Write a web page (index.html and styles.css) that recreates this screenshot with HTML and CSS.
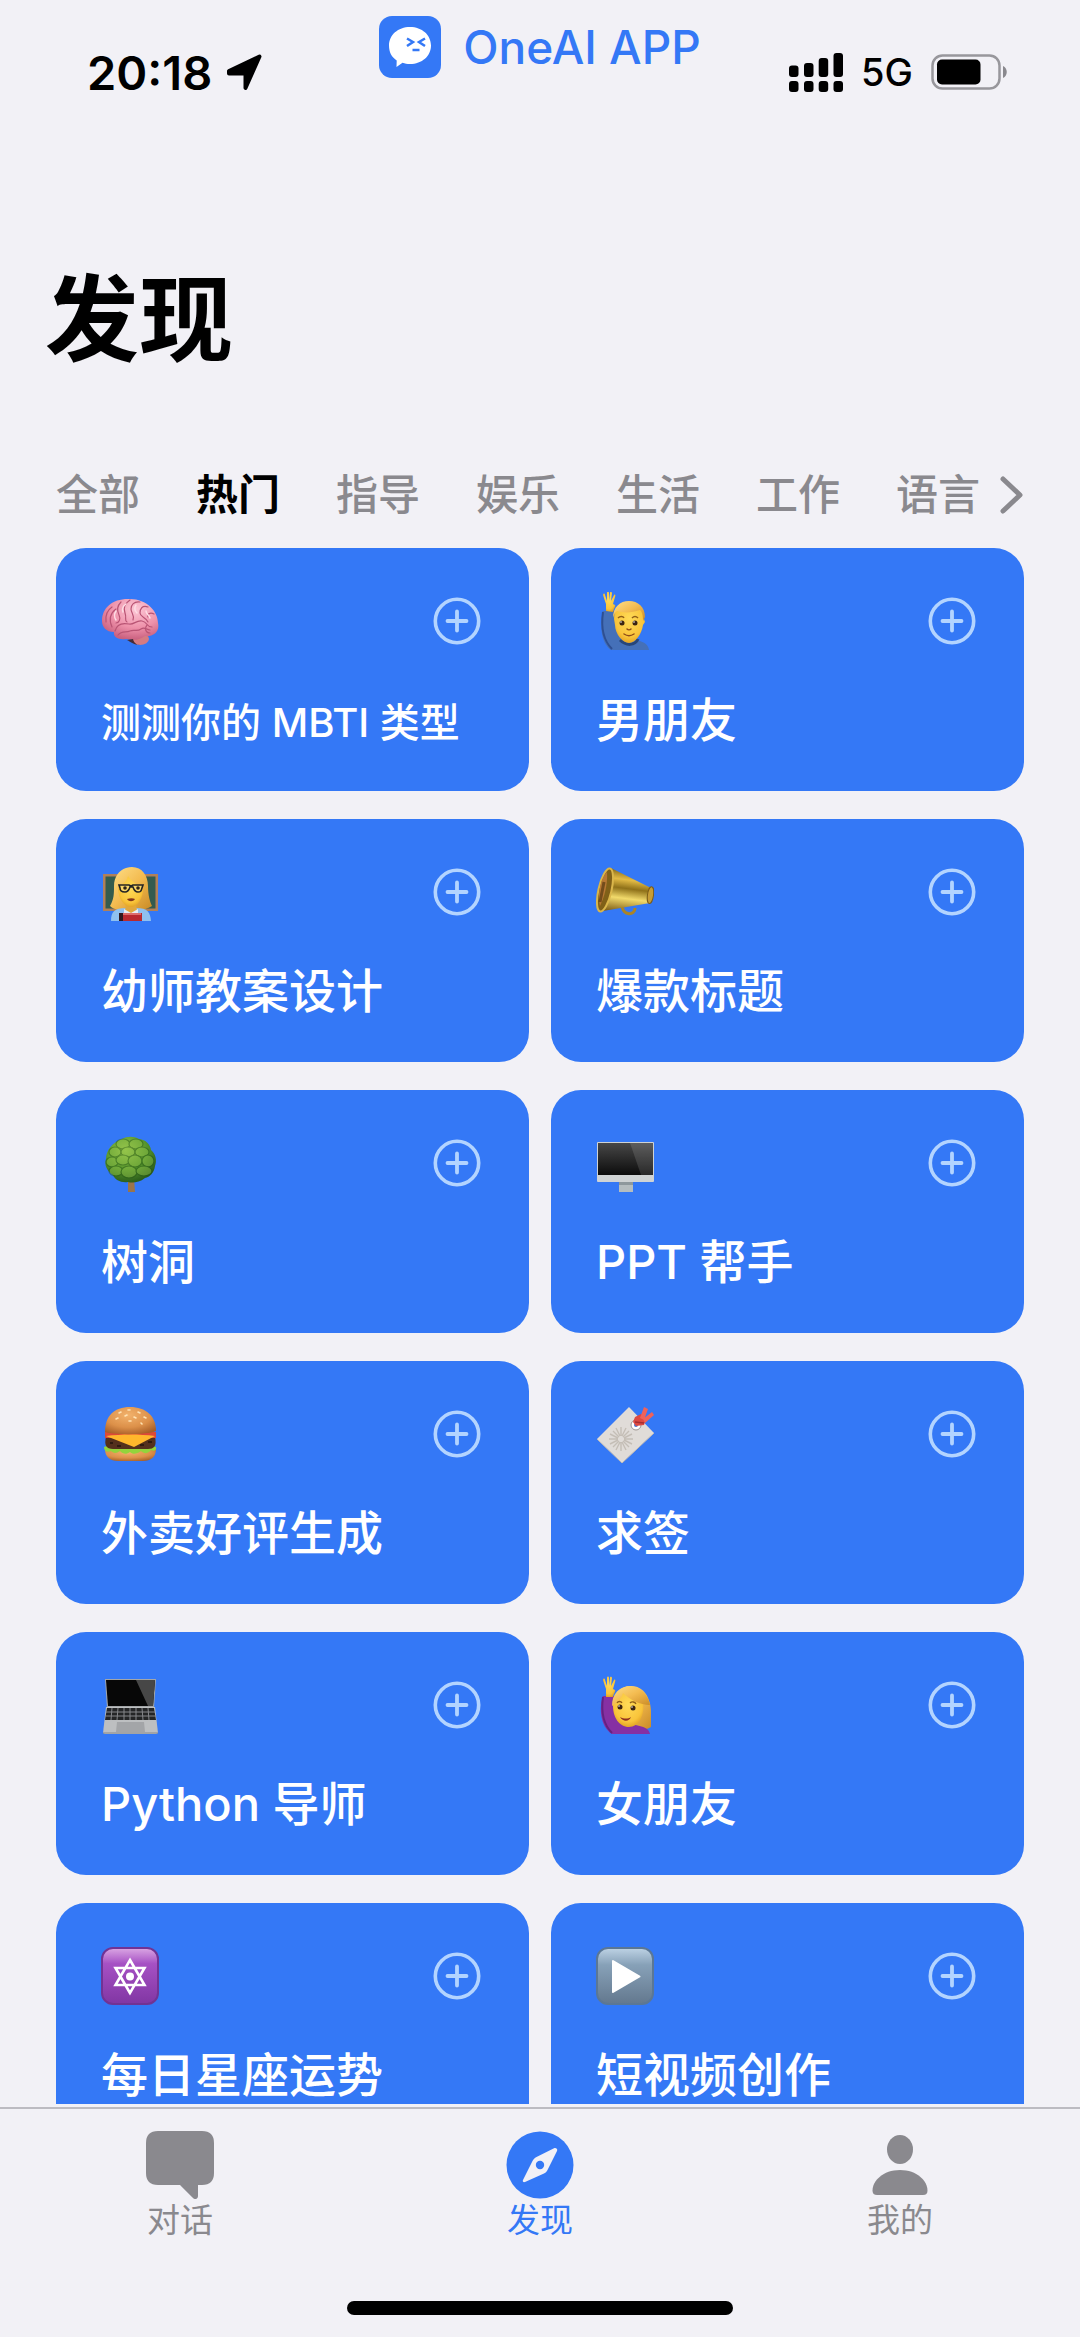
FILE: index.html
```html
<!DOCTYPE html>
<html lang="zh-CN">
<head>
    <meta charset="UTF-8">
    <meta name="viewport" content="width=device-width, initial-scale=1.0">
    <title>发现 - OneAI APP</title>
    <link rel="stylesheet" href="styles.css">
</head>
<body>
    <header class="status-bar">
        <div class="status-left">
            <span class="time">20:18</span>
            <svg class="location-icon" viewBox="0 0 37 37">
                <path d="M3 17L33.500 2.500 19.500 34V19.500H3z" stroke="#000" stroke-width="4" stroke-linejoin="round"/>
            </svg>
        </div>
        <div class="brand">
            <svg class="brand-logo" viewBox="0 0 62 62">
                <rect width="62" height="62" rx="13" fill="#3478f6"/>
                <path d="M31 11c12 0 21 8 21 18.500S43 48 31 48c-3 0-5-.4-7.500-1.200L17.500 51l.2-6.500C12.500 41 10 36 10 29.500 10 19 19 11 31 11z" fill="#fff"/>
                <path d="M28 22.500l6 3.500-6 4M46 22.500L40 26l6 4M33.500 34h7" fill="none" stroke="#3478f6" stroke-width="2.500"/>
            </svg>
            <span class="brand-name">OneAI APP</span>
        </div>
        <div class="status-right">
            <svg class="signal-icon" viewBox="0 0 54 39">
                <rect x="0" y="12.500" width="9.500" height="11.500" rx="3"/>
                <rect x="15" y="10" width="9.500" height="14" rx="3"/>
                <rect x="29.700" y="5" width="9.500" height="19" rx="3"/>
                <rect x="44.500" y="0" width="9.500" height="24" rx="3"/>
                <rect x="0" y="28" width="9.500" height="11" rx="3"/>
                <rect x="15" y="28" width="9.500" height="11" rx="3"/>
                <rect x="29.700" y="28" width="9.500" height="11" rx="3"/>
                <rect x="44.500" y="28" width="9.500" height="11" rx="3"/>
            </svg>
            <span class="network">5G</span>
            <svg class="battery-icon" viewBox="0 0 76 36">
                <rect x="1.500" y="1.500" width="67" height="33" rx="10" fill="none" stroke="#98979c" stroke-width="2.500"/>
                <rect x="6" y="5.500" width="43.500" height="25" rx="5"/>
                <path d="M72 12c5 2 5 10 0 12z" fill="#8a898e"/>
            </svg>
        </div>
    </header>

    <h1 class="page-title">发现</h1>

    <nav class="category-tabs">
        <button class="tab">全部</button>
        <button class="tab active">热门</button>
        <button class="tab">指导</button>
        <button class="tab">娱乐</button>
        <button class="tab">生活</button>
        <button class="tab">工作</button>
        <button class="tab">语言</button>
        <button class="more-button" aria-label="更多">
            <svg viewBox="0 0 24 38">
                <path d="M3 3l17 16L3 35" fill="none" stroke="#8a898e" stroke-width="5" stroke-linecap="round" stroke-linejoin="round"/>
            </svg>
        </button>
    </nav>

    <svg class="defs" aria-hidden="true">
        <defs>
            <symbol id="plus" viewBox="0 0 48 48">
                <circle cx="24" cy="24" r="21.700" fill="none" stroke="#b3d4ff" stroke-width="3.600"/>
                <path d="M24 14.500v19M14.500 24h19" fill="none" stroke="#b3d4ff" stroke-width="3.800" stroke-linecap="round"/>
            </symbol>
            <radialGradient id="brainFill" cx=".6" cy=".25" r=".75">
                <stop offset="0" stop-color="#fcc8d6"/>
                <stop offset=".6" stop-color="#ee91aa"/>
                <stop offset="1" stop-color="#c9607f"/>
            </radialGradient>
            <radialGradient id="skin" cx=".5" cy=".4" r=".65">
                <stop offset="0" stop-color="#ffda57"/>
                <stop offset=".7" stop-color="#f9c43a"/>
                <stop offset="1" stop-color="#dc9a1e"/>
            </radialGradient>
            <linearGradient id="hair" x2="1" y2="1">
                <stop offset="0" stop-color="#ffe08a"/>
                <stop offset=".5" stop-color="#f3bb50"/>
                <stop offset="1" stop-color="#c98a25"/>
            </linearGradient>
            <linearGradient id="gold" x1=".35" y1="0" x2=".2" y2="1">
                <stop offset="0" stop-color="#7d5f14"/>
                <stop offset=".25" stop-color="#e3bb45"/>
                <stop offset=".45" stop-color="#8f7119"/>
                <stop offset=".68" stop-color="#f2da6b"/>
                <stop offset="1" stop-color="#80601a"/>
            </linearGradient>
            <radialGradient id="leaf" cx=".4" cy=".3" r=".7">
                <stop offset="0" stop-color="#9ac94c"/>
                <stop offset=".6" stop-color="#56952c"/>
                <stop offset="1" stop-color="#2c5e1b"/>
            </radialGradient>
            <linearGradient id="screen" x2="0" y2="1">
                <stop offset="0" stop-color="#474747"/>
                <stop offset="1" stop-color="#0c0c0c"/>
            </linearGradient>
            <radialGradient id="bun" cx=".45" cy=".3" r=".75">
                <stop offset="0" stop-color="#f2b26c"/>
                <stop offset=".6" stop-color="#dc9049"/>
                <stop offset="1" stop-color="#a85f28"/>
            </radialGradient>
            <linearGradient id="purple" x2="0" y2="1">
                <stop offset="0" stop-color="#dba7e4"/>
                <stop offset=".28" stop-color="#a651c4"/>
                <stop offset="1" stop-color="#8136a3"/>
            </linearGradient>
            <linearGradient id="slate" x2="0" y2="1">
                <stop offset="0" stop-color="#bed3e5"/>
                <stop offset=".3" stop-color="#87a1b8"/>
                <stop offset="1" stop-color="#63788e"/>
            </linearGradient>
        </defs>
    </svg>

    <main class="card-list">
        <article class="card">
            <div class="card-top">
                <svg class="emoji" viewBox="0 0 58 58">
                    <ellipse cx="39" cy="47" rx="9" ry="6" fill="#d57b82"/>
                    <path d="M1 29C1 16 11 7 27 7c18-1 30 12 30 24 2 9-5 14-13 13-6 5-14 4-19 3-8 1-13-2-12-7C5 40 1 35 1 29z" fill="url(#brainFill)"/>
                    <path d="M5 30c-1-8 3-13 6-15M11 35c-4-9 0-15 4-18M20 10c-5 5-4 9-2 13s0 8-3 8M29 8c-6 4-7 8-5 13s-1 8 2 9M39 10c-6-1-9 3-9 7s4 6 2 11M47 15c-6-2-8 2-8 6s6 4 8 9M53 22c-4-2-7 0-6 3M14 39c2-8 9-8 14-7s7-4 13-3 4 6 10 6M17 43c4-5 8-2 12-4s7 1 11-2 5 1 9 1M46 33c-3 4-1 8 3 8" fill="none" stroke="#b95474" stroke-width="1.200" stroke-linecap="round"/>
                    <path d="M15 19c-2 3-2 6 0 9M25 12c-3 2-4 5-3 8M35 13c-2 3-1 6 1 8M45 19c0 3 3 4 4 7" fill="none" stroke="#fddce4" stroke-width="1.500" stroke-linecap="round"/>
                    <path d="M26 48l6-1c1 4 4 6 7 6-6 0-9-3-13-5z" fill="#472c35"/>
                </svg>
                <button class="add-button" aria-label="添加"><svg><use href="#plus"/></svg></button>
            </div>
            <h2 class="card-title small">测测你的 MBTI 类型</h2>
        </article>

        <article class="card">
            <div class="card-top">
                <svg class="emoji" viewBox="0 0 58 58">
                    <path d="M7 19h12c0 12 2 18 8 23 8 7 25 5 26 16H15C4 50 4 31 7 19z" fill="#4570b8"/>
                    <path d="M7 20c-2 14 0 28 9 37" fill="none" stroke="#2e4f92" stroke-width="2"/>
                    <path d="M24 48c6 6 15 6 18-1" fill="none" stroke="#284679" stroke-width="3"/>
                    <path d="M10 19V12L7 3c0-2 2-2 2 0l2 6V1c0-2 2-2 2 0v8l1-8c0-2 2-1 2 0l-1 8 3-6c1-1 2 0 1 2l-2 7 2 1c1 1-1 3-2 7z" fill="url(#skin)"/>
                    <path d="M18 27c0-11 6-17 15-17s16 7 15 17l1 3-2 3c-1 9-8 18-14 18S19 42 19 33z" fill="url(#skin)"/>
                    <path d="M17 26c0-11 7-17 16-17s16 6 16 16l-2 4c0-6-1-9-3-11-8 3-17 3-23 1-2 1-3 4-4 7z" fill="url(#hair)"/>
                    <path d="M22 26c2-2 5-2 6 0M36 26c2-2 4-2 6 0" fill="none" stroke="#905f18" stroke-width="1.500"/>
                    <circle cx="26" cy="31" r="2.500" fill="#3c2412"/><circle cx="39" cy="31" r="2.500" fill="#3c2412"/>
                    <circle cx="25" cy="30" r=".8" fill="#fff"/><circle cx="38" cy="30" r=".8" fill="#fff"/>
                    <path d="M31 37c1 1 3 1 4 0M28 42c3 2 7 2 10 0" fill="none" stroke="#8e4c18" stroke-width="1.500" stroke-linecap="round"/>
                </svg>
                <button class="add-button" aria-label="添加"><svg><use href="#plus"/></svg></button>
            </div>
            <h2 class="card-title">男朋友</h2>
        </article>

        <article class="card">
            <div class="card-top">
                <svg class="emoji" viewBox="0 0 58 58">
                    <rect x="2" y="11" width="55" height="37" fill="#b08059"/>
                    <rect x="4.500" y="13.500" width="50" height="32" fill="#345b4d"/>
                    <path d="M25 5c14-4 22 6 22 18 0 9 2 16 4 20-5 3-9 4-13 3H20c-4 1-8 0-11-3 4-7 4-12 4-20 0-9 5-16 12-18z" fill="url(#hair)"/>
                    <path d="M10 58c0-9 3-13 15-13h10c12 0 14 4 15 13z" fill="#8fc0ef"/>
                    <path d="M25 41h10l1 7-6 4-6-4z" fill="#e1a83c"/>
                    <path d="M23 46l7 4 7-4v12H23z" fill="#e7eef6"/>
                    <path d="M17 24c6-3 9-7 10-11 4 6 9 9 15 11 1 10-5 20-12 20s-13-9-13-20z" fill="url(#skin)"/>
                    <path d="M18 22h10l2 1 2-1h10l-1 3c-1 4-2 4-4 4-3 0-4-2-5-5h-3c-1 3-2 5-5 5s-5-1-5-4z" fill="#fbd668" stroke="#242324" stroke-width="1.600"/>
                    <circle cx="24" cy="25" r="1.800" fill="#2f2318"/><circle cx="37" cy="25" r="1.800" fill="#2f2318"/>
                    <path d="M26 36c3-1 6-1 8 0-2 3-6 3-8 0z" fill="#82361d"/>
                    <path d="M18 50h23v8H18z" fill="#b9292f"/>
                    <path d="M18 50h4v8h-4z" fill="#301a20"/>
                    <path d="M22 51h18" stroke="#ea8581" stroke-width="1.500"/>
                </svg>
                <button class="add-button" aria-label="添加"><svg><use href="#plus"/></svg></button>
            </div>
            <h2 class="card-title">幼师教案设计</h2>
        </article>

        <article class="card">
            <div class="card-top">
                <svg class="emoji" viewBox="0 0 58 58">
                    <path d="M26 43c1 10 13 10 13 2" fill="none" stroke="#aa8427" stroke-width="3"/>
                    <path d="M15 5l40 20c4 4 2 13-1 15L7 48z" fill="url(#gold)"/>
                    <ellipse cx="9" cy="27" rx="6.500" ry="22" transform="rotate(13 9 27)" fill="#806018" stroke="#dab64b" stroke-width="2"/>
                    <path d="M11 9c-6 5-10 22-7 34 4-8 8-22 7-34z" fill="#b67834"/>
                    <path d="M8 19l-4 20" stroke="#48300d" stroke-width="3" opacity=".6"/>
                    <ellipse cx="54.500" cy="32" rx="3" ry="8.500" transform="rotate(8 54 32)" fill="#c69d37" stroke="#7a5b18"/>
                </svg>
                <button class="add-button" aria-label="添加"><svg><use href="#plus"/></svg></button>
            </div>
            <h2 class="card-title">爆款标题</h2>
        </article>

        <article class="card">
            <div class="card-top">
                <svg class="emoji" viewBox="0 0 58 58">
                    <path d="M27 44h6l1 14h-7z" fill="#9a744a"/>
                    <path d="M21 5c5-3 12-3 17 0 7 1 11 5 12 11 5 4 6 11 4 16-1 7-5 11-10 12-6 5-13 5-17 4-7 1-13-2-15-7-6-4-9-10-7-16 0-9 7-17 16-20z" fill="url(#leaf)"/>
                    <g fill="#8fc04a" opacity=".45" stroke="#255416" stroke-width="1.200">
                        <ellipse cx="22" cy="10" rx="7" ry="5"/><ellipse cx="35" cy="10" rx="7" ry="5"/><ellipse cx="14" cy="18" rx="6" ry="5"/><ellipse cx="27" cy="18" rx="7" ry="5"/><ellipse cx="41" cy="18" rx="7" ry="5"/>
                        <ellipse cx="11" cy="28" rx="6" ry="5"/><ellipse cx="22" cy="26" rx="7" ry="5"/><ellipse cx="34" cy="27" rx="7" ry="6"/><ellipse cx="47" cy="27" rx="6" ry="6"/><ellipse cx="15" cy="37" rx="7" ry="5"/><ellipse cx="28" cy="38" rx="8" ry="6"/><ellipse cx="43" cy="37" rx="8" ry="5"/>
                    </g>
                </svg>
                <button class="add-button" aria-label="添加"><svg><use href="#plus"/></svg></button>
            </div>
            <h2 class="card-title">树洞</h2>
        </article>

        <article class="card">
            <div class="card-top">
                <svg class="emoji" viewBox="0 0 58 58">
                    <path d="M23 47h14v11H23z" fill="#b5bdbf"/>
                    <path d="M23 48h14v3H23z" fill="#8e989c"/>
                    <rect x="1" y="8" width="57" height="40" rx="1" fill="#cfd3d4"/>
                    <rect x="2" y="9" width="55" height="32" fill="url(#screen)"/>
                    <path d="M34 9h23v32H45z" fill="#fff" opacity=".12"/>
                </svg>
                <button class="add-button" aria-label="添加"><svg><use href="#plus"/></svg></button>
            </div>
            <h2 class="card-title">PPT 帮手</h2>
        </article>

        <article class="card">
            <div class="card-top">
                <svg class="emoji" viewBox="0 0 58 58">
                    <path d="M4 44h51c0 8-5 12-13 12H17C9 56 4 52 4 44z" fill="url(#bun)"/>
                    <path d="M3 42c4-3 48-3 52 0 1 3-2 5-5 3-3 4-7 4-10 1-4 3-8 4-11 1-4 3-7 2-10-1-4 3-7 2-9 0-4 2-7 0-7-4z" fill="#93d43c"/>
                    <path d="M5 32h49c2 9-1 12-7 12H12c-7 0-9-4-7-12z" fill="#54301d"/>
                    <path d="M9 38h3M16 41h4M39 40h4M47 37h4" stroke="#2f1a10" stroke-width="2"/>
                    <path d="M4 27h51v6H4z" fill="#dc4938"/>
                    <path d="M5 31c16-2 33-2 49 0L33 42z" fill="#ffb72c"/>
                    <path d="M4 27C4 11 13 2 29 2s26 9 26 24c-7 4-44 4-51 1z" fill="url(#bun)"/>
                    <path d="M18 8l2-1M27 5h2M37 7l2 1M24 11l2-1M33 12l2 1M43 12l2 1M15 14l2-1M28 16h2M40 18l1 1" stroke="#ffe3b4" stroke-width="1.600" stroke-linecap="round"/>
                </svg>
                <button class="add-button" aria-label="添加"><svg><use href="#plus"/></svg></button>
            </div>
            <h2 class="card-title">外卖好评生成</h2>
        </article>

        <article class="card">
            <div class="card-top">
                <svg class="emoji" viewBox="0 0 58 58">
                    <path d="M33 2l25 26-32 30L1 34z" fill="#e0dcd8"/>
                    <path d="M58 28L26 58 1 34" fill="none" stroke="#c1bbb6"/>
                    <path d="M25 22v9M25 37v9M13 34h9M28 34h9M17 26l6 6M27 36l6 6M33 26l-6 6M23 36l-6 6M20 23l4 8M30 23l-4 8M14 29l8 4M36 29l-8 4M14 39l8-4M36 39l-8-4M20 45l4-8M30 45l-4-8" stroke="#c4beb6" stroke-width="1.400"/>
                    <circle cx="40" cy="20" r="5" fill="#fff" stroke="#9d9692"/>
                    <circle cx="40" cy="20" r="2" fill="#4f75ce"/>
                    <path d="M39 12l6-3 5 5-2 6-8 1-3-4z" fill="#dc4942"/>
                    <path d="M44 13l4-11 4 2-4 11zM47 14l9-7 2 3-9 8z" fill="#ef625a"/>
                    <path d="M39 17l9 1" stroke="#a42e32" stroke-width="1.500"/>
                </svg>
                <button class="add-button" aria-label="添加"><svg><use href="#plus"/></svg></button>
            </div>
            <h2 class="card-title">求签</h2>
        </article>

        <article class="card">
            <div class="card-top">
                <svg class="emoji" viewBox="0 0 58 58">
                    <path d="M4 3h51l-2 29H6z" fill="#a3a6a8"/>
                    <path d="M5 4h49l-2 26H7z" fill="#070707"/>
                    <path d="M35 4h19l-2 26h-5z" fill="#474747"/>
                    <path d="M5 31h49l3 26-2 1H4l-2-1z" fill="#bdbfc1"/>
                    <path d="M6 32h47l2 12H4z" fill="#242526"/>
                    <path d="M5 36h49M5 40h50M11 32l-1 12M17 32l-1 12M23 32v12M29 32v12M35 32v12M41 32l1 12M47 32l1 12" stroke="#85878a"/>
                    <path d="M16 46h27l1 10H15z" fill="#a3a5a8"/>
                    <path d="M2 57h55" stroke="#86898c"/>
                </svg>
                <button class="add-button" aria-label="添加"><svg><use href="#plus"/></svg></button>
            </div>
            <h2 class="card-title">Python 导师</h2>
        </article>

        <article class="card">
            <div class="card-top">
                <svg class="emoji" viewBox="0 0 58 58">
                    <path d="M18 28c0-12 8-18 17-18 12 0 20 11 20 27v14c-8 5-18 3-24-2z" fill="url(#hair)"/>
                    <path d="M7 20h12c0 13 2 20 9 25 9 6 24 3 26 13H16C4 50 3 32 7 20z" fill="#8630a3"/>
                    <path d="M7 21c-2 14 0 27 9 36" fill="none" stroke="#652181" stroke-width="2"/>
                    <path d="M10 21v-8L7 4c0-2 2-2 2 0l2 6V2c0-2 2-2 2 0v8l1-8c0-2 2-1 2 0l-1 8 3-6c1-1 2 0 1 2l-2 7 2 1c1 1-1 3-2 7z" fill="url(#skin)"/>
                    <path d="M17 30c0-9 4-15 9-16 5 6 13 10 21 12 2 13-4 25-14 25S17 41 17 30z" fill="url(#skin)"/>
                    <path d="M16 30c0-12 7-20 19-20 10 1 17 9 19 19-10 0-20-5-27-12-2 6-6 10-11 13z" fill="url(#hair)"/>
                    <path d="M21 27c1-2 4-2 5 0M34 27c2-2 5-1 6 1" fill="none" stroke="#8f5d18" stroke-width="1.300"/>
                    <circle cx="24" cy="31" r="2.500" fill="#3c2412"/><circle cx="37" cy="32" r="2.500" fill="#3c2412"/>
                    <circle cx="23" cy="30" r=".8" fill="#fff"/><circle cx="36" cy="31" r=".8" fill="#fff"/>
                    <path d="M24 41c4 2 8 2 11 0-2 5-8 5-11 0z" fill="#8e3022"/>
                </svg>
                <button class="add-button" aria-label="添加"><svg><use href="#plus"/></svg></button>
            </div>
            <h2 class="card-title">女朋友</h2>
        </article>

        <article class="card">
            <div class="card-top">
                <svg class="emoji" viewBox="0 0 58 58">
                    <rect x="1" y="1" width="56" height="56" rx="11" fill="url(#purple)" stroke="#713394" stroke-width="2"/>
                    <path d="M29 13l14.500 25h-29zM29 46L14.500 21h29z" fill="none" stroke="#fff" stroke-width="2.600"/>
                    <circle cx="29" cy="29.500" r="4" fill="#fff"/>
                </svg>
                <button class="add-button" aria-label="添加"><svg><use href="#plus"/></svg></button>
            </div>
            <h2 class="card-title">每日星座运势</h2>
        </article>

        <article class="card">
            <div class="card-top">
                <svg class="emoji" viewBox="0 0 58 58">
                    <rect x="1" y="1" width="56" height="56" rx="11" fill="url(#slate)" stroke="#5b7795" stroke-width="2"/>
                    <path d="M17 14l26.500 15.500L17 45z" fill="#fff" stroke="#fff" stroke-width="2" stroke-linejoin="round"/>
                </svg>
                <button class="add-button" aria-label="添加"><svg><use href="#plus"/></svg></button>
            </div>
            <h2 class="card-title">短视频创作</h2>
        </article>
    </main>

    <footer class="bottom-bar">
        <nav class="bottom-nav">
            <a href="#chat" class="nav-item">
                <svg viewBox="0 0 68 68">
                    <path d="M12 0h44q12 0 12 12v30q0 12-12 12h-4v11c0 3-3 4-5 2L34 54H12Q0 54 0 42V12Q0 0 12 0z" fill="currentColor"/>
                </svg>
                <span>对话</span>
            </a>
            <a href="#discover" class="nav-item active">
                <svg viewBox="0 0 68 68">
                    <circle cx="34" cy="34" r="33.500" fill="currentColor"/>
                    <path d="M50.500 17.500c1 1 .8 1.800.5 2.500L42 38c-1 2-2 3.500-4 4.500L19 51c-1.500.6-2.800-.6-2-2l9.500-19c1-2 2-3 4-4L48.500 17q1.200-.4 2 .5z" fill="#f2f1f6"/>
                    <circle cx="34" cy="34" r="4.200" fill="currentColor"/>
                </svg>
                <span>发现</span>
            </a>
            <a href="#mine" class="nav-item">
                <svg viewBox="0 0 68 68">
                    <ellipse cx="34" cy="18.500" rx="13" ry="14.500" fill="currentColor"/>
                    <path d="M34 39c17 0 27.500 11 27.500 20.500 0 3-1.500 4.500-4.500 4.500H11c-3 0-4.500-1.500-4.500-4.500C6.500 50 17 39 34 39z" fill="currentColor"/>
                </svg>
                <span>我的</span>
            </a>
        </nav>
        <div class="home-indicator"></div>
    </footer>
</body>
</html>
```
FILE: styles.css
```css
:root {
    --primary-color: #3478f6;
    --background-color: #f2f1f6;
    --text-color: #000;
    --text-muted: #8a898e;
    --border-color: #bcbbc1;
}

* {
    margin: 0;
    padding: 0;
    box-sizing: border-box;
}

body {
    background-color: var(--background-color);
    color: var(--text-color);
    font-family: Inter, "Noto Sans CJK SC", sans-serif;
    height: 100vh;
    display: flex;
    flex-direction: column;
    overflow: hidden;
}

button {
    border: none;
    background: none;
    font-family: inherit;
    cursor: pointer;
}

svg {
    display: block;
    flex-shrink: 0;
}

.defs {
    width: 0;
    height: 0;
}

/* status bar */
.status-bar {
    display: grid;
    grid-template-columns: 1fr auto 1fr;
    align-items: start;
    padding-top: 16px;
    height: 224px;
    flex-shrink: 0;
}

.status-left,
.status-right {
    display: flex;
    align-items: center;
    height: 40px;
    margin-top: 36px;
}

.status-left {
    padding-left: 87px;
    gap: 14px;
}

.status-right {
    justify-content: flex-end;
    padding-right: 73px;
    gap: 18px;
}

.time {
    font-size: 47px;
    font-weight: 600;
}

.location-icon {
    width: 37px;
    height: 37px;
}

.brand {
    display: flex;
    align-items: center;
    gap: 22px;
}

.brand-logo {
    width: 62px;
    height: 62px;
}

.brand-name {
    color: var(--primary-color);
    font-size: 46px;
    line-height: 62px;
    font-weight: 500;
}

.signal-icon {
    width: 54px;
    height: 39px;
}

.network {
    font-size: 38px;
    font-weight: 500;
}

.battery-icon {
    width: 76px;
    height: 36px;
}

.page-title {
    padding-left: 45px;
    font-size: 94px;
    font-weight: 700;
    line-height: 192px;
    flex-shrink: 0;
}

/* categories */
.category-tabs {
    display: flex;
    align-items: center;
    gap: 56px;
    height: 132px;
    padding: 26px 56px 0;
    flex-shrink: 0;
}

.tab {
    color: var(--text-muted);
    font-size: 42px;
    font-weight: 500;
    line-height: 52px;
    white-space: nowrap;
}

.tab.active {
    color: var(--text-color);
    font-weight: 700;
}

.more-button {
    margin-left: -36px;
}

.more-button svg {
    width: 24px;
    height: 38px;
}

/* cards */
.card-list {
    flex: 1;
    min-height: 0;
    display: grid;
    grid-template-columns: 1fr 1fr;
    grid-auto-rows: 243px;
    gap: 28px 22px;
    padding: 0 56px;
    margin-bottom: 3px;
    overflow-y: auto;
    scrollbar-width: none;
}

.card {
    display: flex;
    flex-direction: column;
    justify-content: space-between;
    padding: 44px 48px 41px 45px;
    border-radius: 30px;
    background-color: var(--primary-color);
    color: white;
}

.card-top {
    display: flex;
    align-items: center;
    justify-content: space-between;
}

.emoji {
    width: 58px;
    height: 58px;
}

.add-button svg {
    width: 48px;
    height: 48px;
}

.card-title {
    font-size: 47px;
    font-weight: 500;
    line-height: 60px;
    white-space: nowrap;
}

.card-title.small {
    font-size: 40px;
    line-height: 54px;
}

/* bottom bar */
.bottom-bar {
    border-top: 2px solid var(--border-color);
    padding: 22px 0;
    flex-shrink: 0;
}

.bottom-nav {
    display: grid;
    grid-template-columns: repeat(3, 1fr);
}

.nav-item {
    display: flex;
    flex-direction: column;
    align-items: center;
    color: var(--text-muted);
    text-decoration: none;
    font-size: 33px;
    line-height: 42px;
}

.nav-item.active {
    color: var(--primary-color);
}

.nav-item svg {
    width: 68px;
    height: 68px;
}

.home-indicator {
    width: 386px;
    height: 14px;
    margin: 60px auto 0;
    border-radius: 7px;
    background-color: black;
}
```
